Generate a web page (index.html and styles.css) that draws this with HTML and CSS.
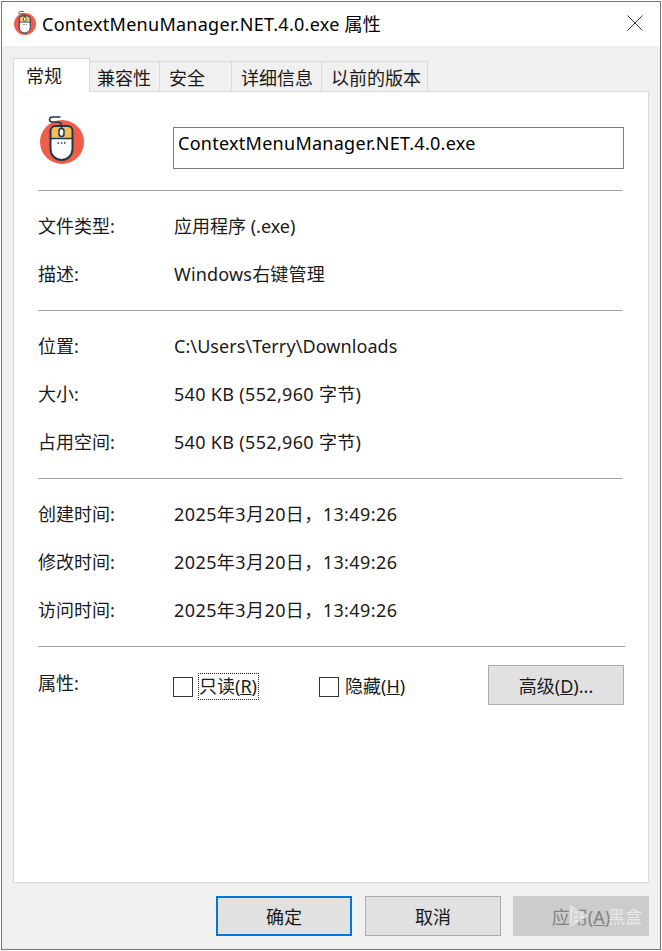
FILE: index.html
```html
<!DOCTYPE html>
<html lang="zh-CN">
<head>
    <meta charset="UTF-8">
    <meta name="viewport" content="width=device-width, initial-scale=1.0">
    <title>ContextMenuManager.NET.4.0.exe 属性</title>
    <link rel="stylesheet" href="styles.css">
</head>
<body>
    <svg class="icon-defs" width="0" height="0">
        <symbol id="mouseIcon" viewBox="0 0 48 52">
            <circle cx="24" cy="28" r="22" fill="#f05d4b"/>
            <path d="M12.500 24v-7a5 5 0 0 1 5-5h12a5 5 0 0 1 5 5v7z" fill="#f9bd58"/>
            <path d="M12.500 24h22v11a11 11 0 0 1-22 0z" fill="#fff"/>
            <path d="M12.500 17a5 5 0 0 1 5-5h12a5 5 0 0 1 5 5v18a11 11 0 0 1-22 0z" fill="none" stroke="#1d3a4a" stroke-width="2"/>
            <path d="M12.500 24.500h22" stroke="#1d3a4a" stroke-width="1.500"/>
            <rect x="21" y="14.500" width="5" height="8" rx="2.500" fill="#fff" stroke="#1d3a4a" stroke-width="1.500"/>
            <path d="M23.500 14.500v-3c0-3-2-3.500-5-3.500h-4c-2 0-3-1-3-2.500s1-2.500 3-2.500h8" fill="none" stroke="#1d3a4a" stroke-width="1.500"/>
            <path d="M19.500 29h1.500M22.800 29h1.500M26 29h1.500" stroke="#1d3a4a" stroke-width="1.500"/>
        </symbol>
    </svg>

    <div class="window">
        <div class="titlebar">
            <svg class="title-icon"><use href="#mouseIcon"/></svg>
            <span class="title-text">ContextMenuManager.NET.4.0.exe 属性</span>
            <svg class="close-icon" viewBox="0 0 16 16"><path d="M.5.500l15 15M15.500.500l-15 15"/></svg>
        </div>

        <div class="content">
            <div class="tabs">
                <div class="tab active">常规</div>
                <div class="tab tab-compat">兼容性</div>
                <div class="tab tab-security">安全</div>
                <div class="tab tab-details">详细信息</div>
                <div class="tab tab-previous">以前的版本</div>
            </div>

            <div class="panel">
                <div class="file-header">
                    <svg class="file-icon"><use href="#mouseIcon"/></svg>
                    <div class="name-box">ContextMenuManager.NET.4.0.exe</div>
                </div>

                <div class="section">
                    <div class="row"><span class="label">文件类型:</span><span>应用程序 (.exe)</span></div>
                    <div class="row"><span class="label">描述:</span><span class="value-desc">Windows右键管理</span></div>
                </div>

                <div class="section">
                    <div class="row"><span class="label">位置:</span><span class="value-path">C:\Users\Terry\Downloads</span></div>
                    <div class="row"><span class="label">大小:</span><span class="value-num">540 KB (552,960 字节)</span></div>
                    <div class="row"><span class="label">占用空间:</span><span class="value-num">540 KB (552,960 字节)</span></div>
                </div>

                <div class="section">
                    <div class="row"><span class="label">创建时间:</span><span class="value-date">2025年3月20日，13:49:26</span></div>
                    <div class="row"><span class="label">修改时间:</span><span class="value-date">2025年3月20日，13:49:26</span></div>
                    <div class="row"><span class="label">访问时间:</span><span class="value-date">2025年3月20日，13:49:26</span></div>
                </div>

                <div class="attrs">
                    <span class="attrs-label">属性:</span>
                    <div class="check check-readonly">
                        <span class="check-box"></span>
                        <span class="check-text focused">只读(<u>R</u>)</span>
                    </div>
                    <div class="check check-hidden">
                        <span class="check-box"></span>
                        <span class="check-text">隐藏(<u>H</u>)</span>
                    </div>
                    <button class="btn btn-advanced">高级(<u>D</u>)...</button>
                </div>
            </div>

            <div class="footer">
                <button class="btn btn-default">确定</button>
                <button class="btn btn-cancel">取消</button>
                <button class="btn btn-apply">应用(<u>A</u>)</button>
                <div class="watermark">
                    <svg class="watermark-logo" viewBox="0 0 22 24"><path d="M2 1l19 11-19 11z"/></svg>
                    <span>黑盒</span>
                </div>
            </div>
        </div>
    </div>
</body>
</html>
```

FILE: styles.css
```css
* {
    box-sizing: border-box;
    margin: 0;
    padding: 0;
}

body {
    font-family: "Noto Sans", "Noto Sans CJK SC", sans-serif;
    font-size: 18px;
    color: #1a1a1a;
    background-color: white;
    padding: 1px 0 0 1px;
}

.icon-defs {
    display: block;
}

.window {
    width: 660px;
    height: 949px;
    border: 1px solid #777;
    background-color: #f0f0f0;
    display: flex;
    flex-direction: column;
}

.titlebar {
    height: 44px;
    flex-shrink: 0;
    background-color: white;
    display: flex;
    align-items: center;
    padding: 0 17px 2px 11px;
}

.title-icon {
    width: 24px;
    height: 26px;
    margin-right: 5px;
}

.title-text {
    flex: 1;
    color: #000;
    letter-spacing: 0.27px;
}

.close-icon {
    width: 16px;
    height: 16px;
    fill: none;
    stroke: #333;
    stroke-width: 1;
}

.content {
    flex: 1;
    display: flex;
    flex-direction: column;
    padding: 12px 11px 13px 11px;
}

.tabs {
    display: flex;
    align-items: flex-end;
    height: 33px;
    flex-shrink: 0;
    position: relative;
    z-index: 1;
}

.tab {
    height: 30px;
    line-height: 32px;
    padding-left: 9px;
    border: 1px solid #d9d9d9;
    border-left: none;
    border-bottom: none;
}

.tab.active {
    width: 77px;
    height: 34px;
    margin-bottom: -1px;
    line-height: 34px;
    padding-left: 12px;
    background-color: white;
    border-left: 1px solid #d9d9d9;
}

.tab-compat {
    width: 70px;
    padding-left: 7px;
}

.tab-security {
    width: 72px;
}

.tab-details {
    width: 90px;
}

.tab-previous {
    width: 106px;
}

.panel {
    flex: 1;
    background-color: white;
    border: 1px solid #d9d9d9;
    padding: 0 23px 0 24px;
}

.file-header {
    height: 98px;
    display: flex;
}

.file-icon {
    width: 48px;
    height: 52px;
    margin-top: 22px;
}

.name-box {
    width: 451px;
    height: 42px;
    margin-top: 35px;
    margin-left: 87px;
    border: 1px solid #7a7a7a;
    padding-left: 4px;
    line-height: 30px;
    color: #000;
    letter-spacing: 0.27px;
}

.section {
    border-top: 1px solid #a0a0a0;
    margin-right: 3px;
    padding: 11px 0 12px 0;
}

.row {
    height: 48px;
    line-height: 48px;
    display: flex;
}

.label {
    width: 136px;
    flex-shrink: 0;
}

.value-num {
    letter-spacing: 0.32px;
}

.value-date {
    letter-spacing: 0.42px;
}

.value-path {
    letter-spacing: 0.08px;
}

.value-desc {
    letter-spacing: 0.18px;
}

.attrs {
    border-top: 1px solid #a0a0a0;
    display: flex;
    align-items: flex-start;
    padding-top: 18px;
}

.attrs-label {
    width: 135px;
    flex-shrink: 0;
    margin-top: 4px;
    line-height: 28px;
}

.check {
    display: flex;
    align-items: center;
    height: 27px;
    margin-top: 8px;
}

.check-box {
    width: 20px;
    height: 20px;
    background-color: white;
    border: 1px solid #333;
    margin-right: 5px;
}

.check-readonly {
    width: 146px;
}

.check-hidden {
    width: 169px;
}

.check-text {
    line-height: 25px;
    white-space: nowrap;
    border: 1px dotted transparent;
    padding-right: 1px;
}

.check-text.focused {
    border-color: #222;
}

.btn {
    width: 136px;
    height: 40px;
    flex-shrink: 0;
    font-family: inherit;
    font-size: 18px;
    color: #1a1a1a;
    background-color: #e1e1e1;
    border: 1px solid #adadad;
}

.footer {
    display: flex;
    justify-content: flex-end;
    padding-top: 13px;
    position: relative;
}

.btn-default {
    border: 2px solid #0078d7;
}

.btn-cancel {
    margin-left: 13px;
}

.btn-apply {
    margin-left: 12px;
    background-color: #cccccc;
    border-color: #cccccc;
    color: #838383;
}

.watermark {
    position: absolute;
    right: 7px;
    top: 20px;
    display: flex;
    align-items: center;
    gap: 18px;
    font-size: 17px;
    color: rgba(240, 240, 240, 0.8);
}

.watermark-logo {
    width: 22px;
    height: 24px;
    fill: rgba(240, 240, 240, 0.7);
}
```
